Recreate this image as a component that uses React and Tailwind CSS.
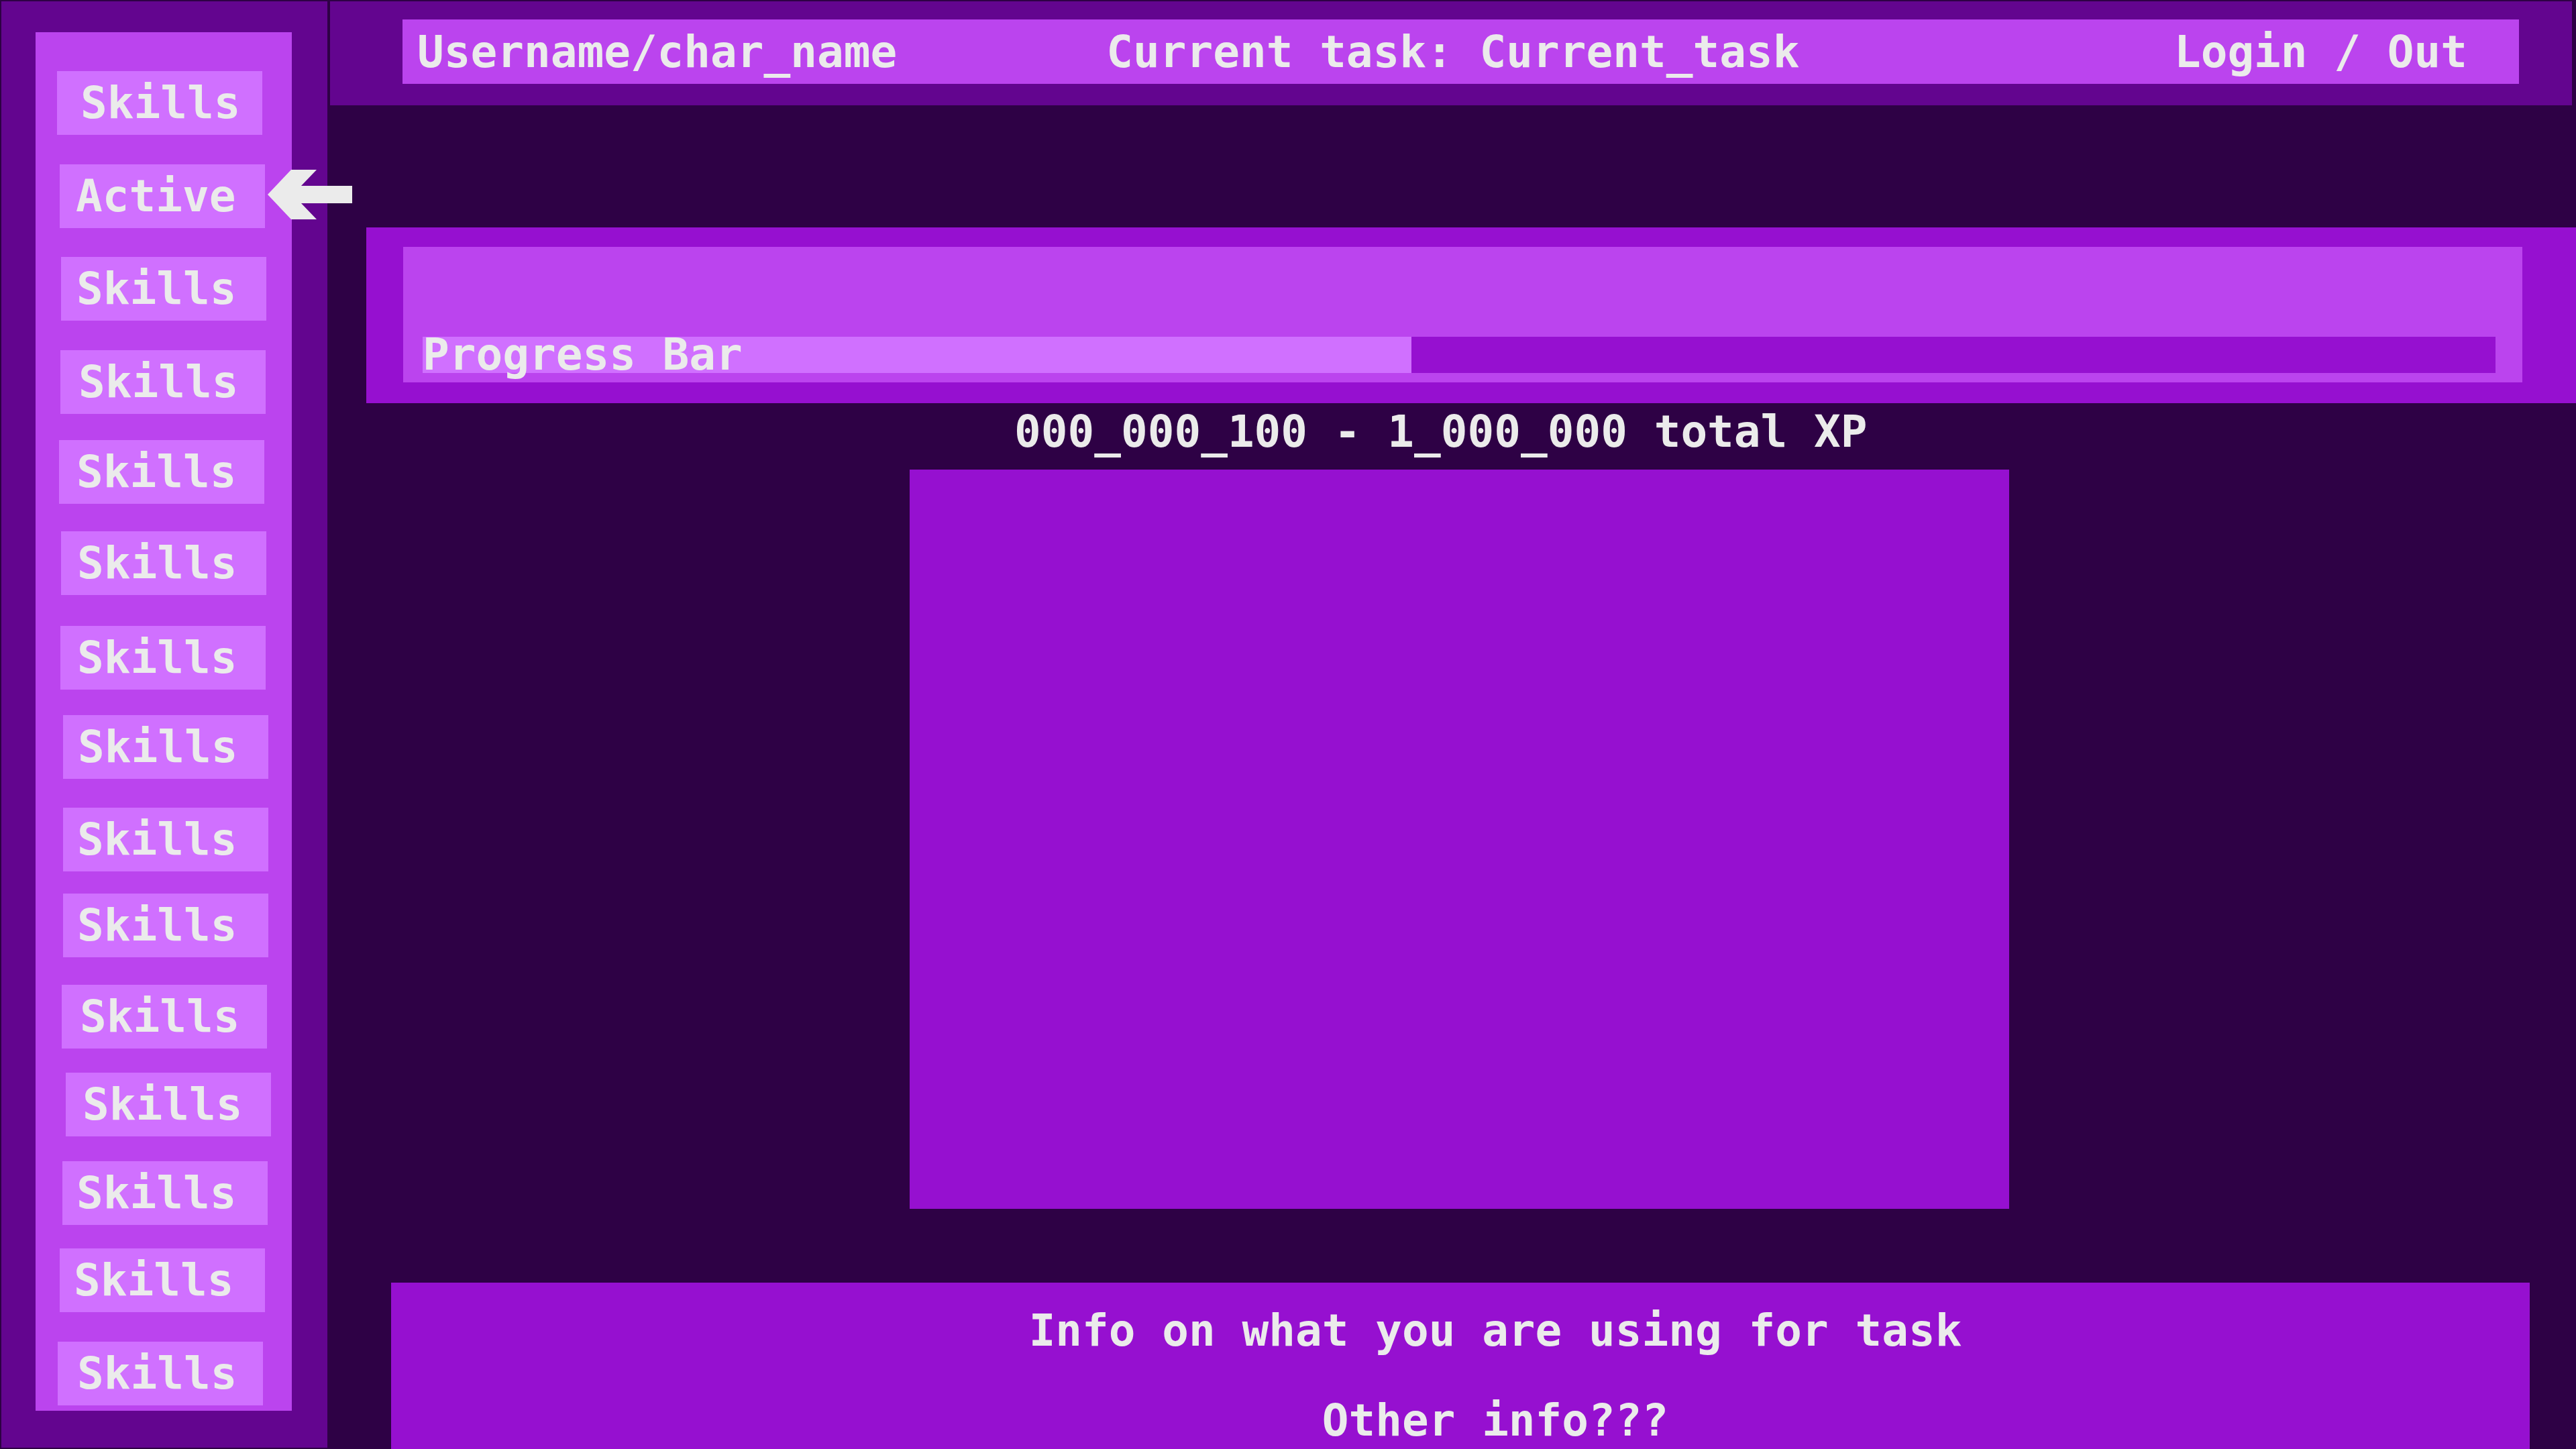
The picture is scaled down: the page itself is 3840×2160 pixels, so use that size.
import React from 'react'

const font = { fontFamily: '"DejaVu Sans Mono", "Liberation Mono", monospace' }

// hand-placed nav buttons, offsets taken from the mockup
const navItems = [
  { label: 'Skills', cls: 'ml-[32px] mt-[58px] pl-[35px]' },
  { label: 'Active', cls: 'ml-[36px] mt-[44px] pl-[24px]' },
  { label: 'Skills', cls: 'ml-[38px] mt-[43px] pl-[23px]' },
  { label: 'Skills', cls: 'ml-[37px] mt-[44px] pl-[27px]' },
  { label: 'Skills', cls: 'ml-[35px] mt-[39px] pl-[26px]' },
  { label: 'Skills', cls: 'ml-[38px] mt-[41px] pl-[24px]' },
  { label: 'Skills', cls: 'ml-[37px] mt-[46px] pl-[25px]' },
  { label: 'Skills', cls: 'ml-[41px] mt-[38px] pl-[22px]' },
  { label: 'Skills', cls: 'ml-[41px] mt-[43px] pl-[21px]' },
  { label: 'Skills', cls: 'ml-[41px] mt-[33px] pl-[21px]' },
  { label: 'Skills', cls: 'ml-[39px] mt-[41px] pl-[27px]' },
  { label: 'Skills', cls: 'ml-[45px] mt-[36px] pl-[25px]' },
  { label: 'Skills', cls: 'ml-[40px] mt-[37px] pl-[21px]' },
  { label: 'Skills', cls: 'ml-[36px] mt-[35px] pl-[21px]' },
  { label: 'Skills', cls: 'ml-[33px] mt-[44px] pl-[29px]' },
]

const ActiveArrow = () => (
  <svg
    className="absolute left-[397px] top-[251px]"
    width="130"
    height="78"
    viewBox="397 251 130 78"
  >
    <polygon
      points="399,290 434,253 472,253 449,277 525,277 525,303 449,303 472,327 434,327"
      fill="#ebebeb"
    />
  </svg>
)

const Sidebar = () => {
  return (
    <div className="w-[486px] h-[2156px] shrink-0 bg-[#63058f]">
      <div className="ml-[51px] mt-[46px] w-[382px] h-[2055px] bg-[#bb44ee] flex flex-col">
        {navItems.map((item, i) => (
          <div
            key={i}
            className={`${item.cls} w-[306px] h-[95px] shrink-0 bg-[#d070ff] flex items-center text-[66px] leading-[77px] font-bold text-[#ebebeb]`}
          >
            {item.label}
          </div>
        ))}
      </div>
    </div>
  )
}

const Header = () => (
  <div className="w-[3342px] h-[155px] shrink-0 bg-[#63058f] pt-[27px]">
    <div className="ml-[108px] w-[3155px] h-[96px] bg-[#bb44ee] flex items-center pl-[22px] pr-[77px] text-[66px] leading-[77px] font-bold text-[#ebebeb] whitespace-pre">
      <span>Username/char_name</span>
      <span className="ml-[312px]">Current task: Current_task</span>
      <span className="ml-auto">Login / Out</span>
    </div>
  </div>
)

const ProgressPanel = ({ value }) => (
  <div className="ml-[54px] mt-[182px] w-[3294px] h-[262px] shrink-0 bg-[#9610d0] pt-[29px]">
    <div className="ml-[55px] w-[3159px] h-[202px] bg-[#bb44ee] pt-[134px]">
      <div className="ml-[29px] w-[3090px] h-[54px] bg-[#9610d0] flex">
        <div
          className="h-full bg-[#d070ff] text-[66px] leading-[54px] font-bold text-[#ebebeb] whitespace-pre"
          style={{ width: `${value}%` }}
        >
          Progress Bar
        </div>
      </div>
    </div>
  </div>
)

export default function App() {
  return (
    <div
      className="w-[3840px] h-[2160px] bg-[#2e0145] overflow-hidden relative flex p-[2px] gap-[4px]"
      style={font}
    >
      <Sidebar />
      <div className="flex flex-col w-[3342px] shrink-0">
        <Header />
        <ProgressPanel value={47.7} />
        <div className="ml-[1020px] mt-[4px] shrink-0 text-[66px] leading-[77px] font-bold text-[#ebebeb] whitespace-pre">
          000_000_100 - 1_000_000 total XP
        </div>
        <div className="ml-[864px] mt-[18px] w-[1639px] h-[1102px] shrink-0 bg-[#9610d0]" />
        <div className="ml-[91px] mt-[110px] w-[3188px] h-[260px] shrink-0 bg-[#9610d0] pt-[5px] pl-[104px] text-center text-[66px] leading-[134px] font-bold text-[#ebebeb]">
          <div>Info on what you are using for task</div>
          <div>Other info???</div>
        </div>
      </div>
      <ActiveArrow />
    </div>
  )
}
